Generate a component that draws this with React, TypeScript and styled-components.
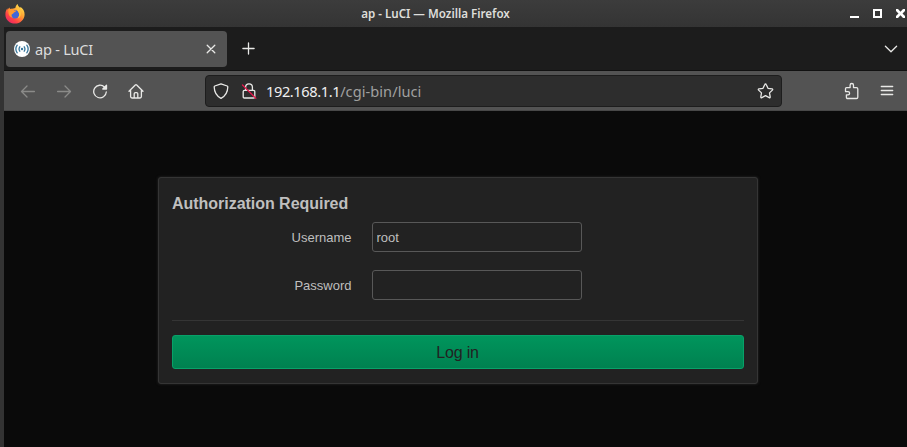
import React from "react";
import styled, { createGlobalStyle } from "styled-components";

const GlobalStyle = createGlobalStyle`
  * { box-sizing: border-box; }
  body { margin: 0; background: #0a0a0a; overflow: hidden; }
`;

const Window = styled.div`
  width: 907px;
  height: 447px;
  display: flex;
  flex-direction: column;
  background: #333;
  font-family: "Noto Sans", sans-serif;
`;

const TitleBar = styled.header`
  height: 27px;
  flex: none;
  display: grid;
  grid-template-columns: 200px 1fr 200px;
  align-items: center;
  padding-left: 5px;
  background: linear-gradient(#3c3c3c, #343434);
`;

const WindowTitle = styled.div`
  text-align: center;
  font-size: 11.6px;
  font-weight: 600;
  line-height: 16px;
  color: #dededb;
  white-space: nowrap;
  padding: 0 41px 0 0;
`;

const WindowButtons = styled.div`
  display: flex;
  justify-content: flex-end;
`;

const Frame = styled.div`
  flex: 1;
  margin-left: 4px;
  display: flex;
  flex-direction: column;
`;

const TabStrip = styled.nav`
  height: 44px;
  flex: none;
  display: flex;
  align-items: center;
  padding: 0 6px 0 2px;
  background: #1c1c1c;
  border-bottom: 1px solid #111;
`;

const Tab = styled.div`
  width: 221px;
  height: 36px;
  display: flex;
  align-items: center;
  padding: 0 6px 0 8px;
  border-radius: 4px;
  background: #535353;
`;

const TabLabel = styled.span`
  flex: 1;
  margin-left: 5px;
  font-size: 14.6px;
  line-height: 20px;
  letter-spacing: -0.25px;
  color: #dcdcdc;
`;

const Spacer = styled.div`
  flex: 1;
`;

const IconButton = styled.span<{ $w: number; $color?: string }>`
  width: ${(p) => p.$w}px;
  display: flex;
  flex: none;
  align-items: center;
  justify-content: center;
  color: ${(p) => p.$color ?? "#e9e9e7"};
`;

const Toolbar = styled.div`
  height: 40px;
  flex: none;
  display: flex;
  align-items: center;
  padding: 0 2px 0 6px;
  background: #535353;
  border-bottom: 1px solid #484848;
`;

const AddressBar = styled.div`
  width: 577px;
  height: 32px;
  margin-left: 52px;
  display: flex;
  align-items: center;
  padding: 0 1px;
  border: 1px solid #1d1d1d;
  border-radius: 4px;
  background: #2d2d2d;
`;

const Address = styled.span`
  flex: 1;
  margin-left: 3px;
  font-size: 14.6px;
  line-height: 20px;
  letter-spacing: 0.05px;
  color: #a0a0a0;
  white-space: nowrap;
`;

const Host = styled.span`
  letter-spacing: -0.4px;
  color: #f0f0f0;
`;

const Page = styled.main`
  flex: 1;
  padding: 66px 0 0 154px;
  background: #0a0a0a;
  font-family: "Liberation Sans", Arial, sans-serif;
  color: #bfbfbf;
`;

const Card = styled.form`
  width: 600px;
  height: 207px;
  padding: 13px;
  display: flex;
  flex-direction: column;
  border: 1px solid #353535;
  border-radius: 3px;
  background: #222;
  box-shadow: 0 0 3px #2a2a2a;
`;

const Heading = styled.h1`
  margin: 3px 0 9px;
  font-size: 16px;
  font-weight: bold;
  line-height: 19px;
  letter-spacing: -0.03px;
`;

const Field = styled.label`
  height: 30px;
  margin-bottom: 18px;
  display: grid;
  grid-template-columns: 179.5px 210px;
  column-gap: 20.5px;
  align-items: center;
  font-size: 13px;
`;

const FieldName = styled.span`
  text-align: right;
`;

const Input = styled.input`
  height: 30px;
  padding: 0 3.5px;
  border: 1px solid #585858;
  border-radius: 3px;
  outline: none;
  background: #222;
  color: #bfbfbf;
  font: 13px "Liberation Sans", Arial, sans-serif;
`;

const Divider = styled.div`
  height: 1px;
  margin: 2px 0 14px;
  background: #353535;
`;

const LoginButton = styled.button`
  height: 34px;
  padding: 2px 1px 0 0;
  border: 1px solid #08a169;
  border-radius: 3px;
  background: linear-gradient(#00955c, #008150);
  color: #222;
  font: 16px "Liberation Sans", Arial, sans-serif;
  letter-spacing: -0.15px;
`;

const Svg = styled.svg`
  display: block;
  flex: none;
  fill: none;
  stroke: currentColor;
  stroke-width: 1.3;
  stroke-linecap: round;
  stroke-linejoin: round;
`;

const FirefoxLogo = () => (
  <Svg width="20" height="20" viewBox="0 0 20 20">
    <defs>
      <linearGradient id="fox" x1="0.85" y1="0.1" x2="0.2" y2="0.95">
        <stop offset="0" stopColor="#ffe14d" />
        <stop offset="0.4" stopColor="#ff9a31" />
        <stop offset="0.75" stopColor="#ff4345" />
        <stop offset="1" stopColor="#e92863" />
      </linearGradient>
    </defs>
    <path stroke="none" fill="url(#fox)" d="M12.6.1c.2 2 1.5 2.800 2.600 3.900.2-.5.200-.9.100-1.300 2.600 1.600 4.500 4.500 4.300 8-.2 5.100-4.500 8.900-9.600 8.900C4.700 19.600.4 15.700.4 10.400c0-2.500.8-4.600 2-6.100V6c.9-1.200 1.400-1.900 2.300-2.400-.1.800.1 1.400.6 1.700C8 4.800 9 4.300 10.300 4.100 10.700 2.300 11.300 1 12.600.1z" />
    <circle cx="9.900" cy="10.300" r="4.300" fill="#4167d8" stroke="none" />
    <path stroke="none" fill="#ff9930" d="M3.600 5.500c2.300-1.200 4.400-.6 5.700.9h2c-.1 1.200-1.600 1.500-2.400 2.200-.3 1-1.200 1.400-2 1.700-.8 1.100 0 2.800 1.300 3.500-3.500-.3-5.400-3.300-4.600-8.300z" />
    <path stroke="none" fill="#ffc43d" d="M12.200 4.300c2.500.8 4.500 3.600 3.500 6.900-.6 2-1.700 2.800-3 3.200 1.500-1.600 2-4.100.8-6.100-.9-1.400-1.500-2.300-1.300-4z" />
  </Svg>
);

const Favicon = () => (
  <Svg width="16" height="16" viewBox="0 0 16 16" color="#39779b">
    <circle cx="8" cy="8" r="8" fill="#fff" stroke="none" />
    <circle cx="8" cy="8" r="1.200" fill="currentColor" stroke="none" />
    <path d="M5.800 5.800q-1.500 2.200 0 4.400M10.200 5.800q1.500 2.200 0 4.400M3.200 4.200q-2.700 3.800 0 7.600M12.800 4.200q2.700 3.800 0 7.600" />
  </Svg>
);

const Minimize = () => (
  <Svg width="13" height="13" viewBox="0 0 13 13"><path stroke="none" fill="currentColor" d="M2 9h9v2H2z" /></Svg>
);
const Maximize = () => (
  <Svg width="13" height="13" viewBox="0 0 13 13"><path stroke="none" fill="currentColor" fillRule="evenodd" d="M2 2h9v9H2zM4 4v5h5V4z" /></Svg>
);
const CloseWindow = () => (
  <Svg width="11" height="13" viewBox="0 0 11 13">
    <path stroke="none" fill="currentColor" d="M1 2h2l2.500 2.700L8 2h2v2L7.500 6.500 10 9v2H8L5.500 8.300 3 11H1V9l2.500-2.500L1 4z" />
  </Svg>
);
const TabClose = () => (
  <Svg width="10" height="10" viewBox="0 0 10 10"><path d="M1.200 1.200l7.600 7.600M8.800 1.200L1.200 8.800" /></Svg>
);
const Plus = () => (
  <Svg width="13" height="13" viewBox="0 0 13 13"><path d="M6.500.9v11.200M.9 6.500h11.200" /></Svg>
);
const Chevron = () => (
  <Svg width="14" height="8" viewBox="0 0 14 8"><path d="M1.400 1.300L7 6.700l5.600-5.400" /></Svg>
);
const Back = () => (
  <Svg width="16" height="16" viewBox="0 0 16 16"><path d="M14.400 8.500H1.700M7 3L1.500 8.500 7 14" /></Svg>
);
const Forward = () => (
  <Svg width="16" height="16" viewBox="0 0 16 16"><path d="M1.600 8.500h12.700M9 3l5.500 5.500L9 14" /></Svg>
);
const Reload = () => (
  <Svg width="16" height="16" viewBox="0 0 16 16">
    <path d="M12.600 4.200A6.300 6.300 0 1 0 14.300 9" />
    <path d="M14.500 2.300v3.700h-3.700z" fill="currentColor" />
  </Svg>
);
const Home = () => (
  <Svg width="16" height="16" viewBox="0 0 16 16">
    <path d="M1 8.300L7.300 2q.7-.6 1.400 0L15 8.300M2.600 7.200v6.400q0 1.400 1.400 1.400h8q1.400 0 1.400-1.400V7.200M6.200 14.800v-4q0-1.200 1.200-1.200h1.200q1.200 0 1.200 1.200v4" />
  </Svg>
);
const Shield = () => (
  <Svg width="16" height="16" viewBox="0 0 16 16">
    <path d="M8 .8L14.200 3q.6.200.6 1C14.700 8.500 12.500 13 8 15.300 3.500 13 1.300 8.500 1.200 4q0-.8.600-1z" />
  </Svg>
);
const BrokenLock = () => (
  <Svg width="16" height="16" viewBox="0 0 16 16">
    <path d="M4.600 7.400V4.200a3.400 3.400 0 0 1 6.800 0v3.200M3.400 7.400h9.200q1.200 0 1.200 1.200v5.200q0 1.200-1.200 1.200H3.400q-1.200 0-1.200-1.200V8.600q0-1.200 1.200-1.200z" />
    <path d="M1.500 2l13.300 13.200" stroke="#e3184b" />
  </Svg>
);
const Star = () => (
  <Svg width="17" height="16" viewBox="0 0 17 16">
    <path d="M8.500 1q.5 0 .8.700l1.700 3.600 4 .6q1.200.3.400 1.200l-2.900 2.800.7 4q0 1.200-1 .7l-3.700-1.900-3.700 1.900q-1 .5-1-.7l.7-4-2.900-2.800Q.8 6.200 2 5.900l4-.6 1.700-3.600Q8 1 8.500 1z" />
  </Svg>
);
const Puzzle = () => (
  <Svg width="16" height="18" viewBox="-0.8 0 16 18">
    <path d="M2.700 5.600h3.600V3.200a1.700 1.700 0 0 1 3.400 0v2.400h3q1.300 0 1.300 1.300v8.300q0 1.300-1.300 1.300H3.900q-1.300 0-1.300-1.300v-2.400h1.600a1.600 1.600 0 0 0 0-3.200H1.700V6.800q0-1.200 1-1.200z" />
  </Svg>
);
const Menu = () => (
  <Svg width="14" height="12" viewBox="0 0 14 12"><path d="M1.300 1.500h11.400M1.300 5.500h11.400M1.300 9.500h11.400" /></Svg>
);

export default function App() {
  return (
    <>
      <GlobalStyle />
      <Window>
        <TitleBar>
          <FirefoxLogo />
          <WindowTitle>ap - LuCI — Mozilla Firefox</WindowTitle>
          <WindowButtons>
            <IconButton $w={13} $color="#fff"><Minimize /></IconButton>
            <IconButton $w={33} $color="#fff"><Maximize /></IconButton>
            <IconButton $w={13} $color="#fff"><CloseWindow /></IconButton>
          </WindowButtons>
        </TitleBar>
        <Frame>
          <TabStrip>
            <Tab>
              <Favicon />
              <TabLabel>ap - LuCI</TabLabel>
              <IconButton $w={20}><TabClose /></IconButton>
            </Tab>
            <IconButton $w={43}><Plus /></IconButton>
            <Spacer />
            <IconButton $w={20}><Chevron /></IconButton>
          </TabStrip>
          <Toolbar>
            <IconButton $w={36} $color="#8b8b89"><Back /></IconButton>
            <IconButton $w={36} $color="#8b8b89"><Forward /></IconButton>
            <IconButton $w={36}><Reload /></IconButton>
            <IconButton $w={35}><Home /></IconButton>
            <AddressBar>
              <IconButton $w={28}><Shield /></IconButton>
              <IconButton $w={28}><BrokenLock /></IconButton>
              <Address><Host>192.168.1.1</Host>/cgi-bin/luci</Address>
              <IconButton $w={29}><Star /></IconButton>
            </AddressBar>
            <Spacer />
            <IconButton $w={36}><Puzzle /></IconButton>
            <IconButton $w={36}><Menu /></IconButton>
          </Toolbar>
          <Page>
            <Card>
              <Heading>Authorization Required</Heading>
              <Field>
                <FieldName>Username</FieldName>
                <Input type="text" defaultValue="root" />
              </Field>
              <Field>
                <FieldName>Password</FieldName>
                <Input type="password" />
              </Field>
              <Divider />
              <LoginButton type="button">Log in</LoginButton>
            </Card>
          </Page>
        </Frame>
      </Window>
    </>
  );
}
